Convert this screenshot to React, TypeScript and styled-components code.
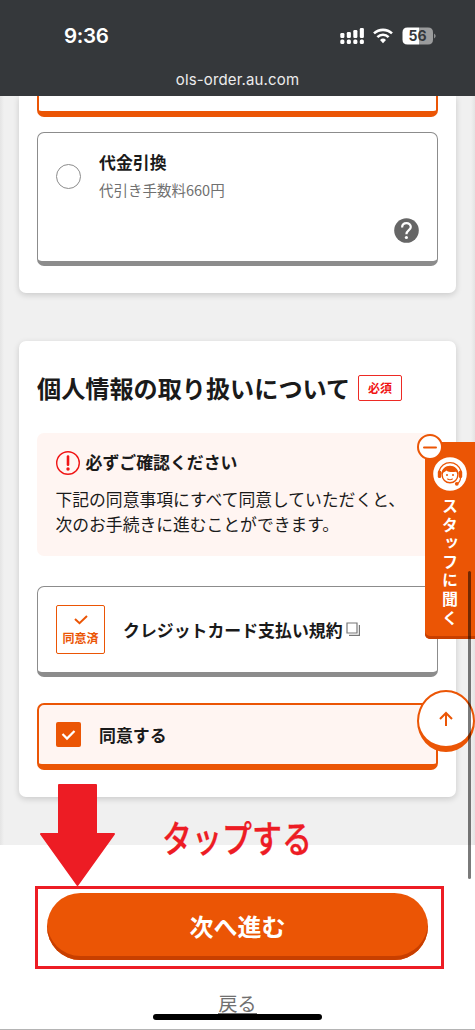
import React from 'react';
import styled, { createGlobalStyle } from 'styled-components';

const ORANGE = '#eb5505';
const RED = '#ed1c24';

const GlobalStyle = createGlobalStyle`
  *, *::before, *::after { box-sizing: border-box; }
  body {
    margin: 0;
    background: #fff;
    color: #1a1a1a;
    font-family: "Noto Sans CJK JP", "Noto Sans", sans-serif;
  }
`;

const Page = styled.div`
  position: relative;
  width: 475px;
  height: 1030px;
  overflow: hidden;
  display: flex;
  flex-direction: column;
`;

const BrowserBar = styled.header`
  flex: none;
  height: 96px;
  background: #35383b;
  color: #fff;
  font-family: Inter, "Liberation Sans", sans-serif;
  display: flex;
  flex-direction: column;
`;

const StatusRow = styled.div`
  height: 69px;
  padding: 2px 39px 0 64px;
  display: flex;
  align-items: center;
  justify-content: space-between;
`;

const Clock = styled.span`
  font-size: 20.5px;
  font-weight: 600;
  line-height: 24px;
  letter-spacing: -0.35px;
`;

const StatusIcons = styled.svg`
  display: block;
`;

const Address = styled.div`
  text-align: center;
  font-size: 15px;
  line-height: 22px;
  letter-spacing: 0.15px;
  color: #ececec;
`;

const Content = styled.main`
  flex: none;
  height: 749px;
  overflow: hidden;
  display: flex;
  flex-direction: column;
  gap: 48px;
  padding: 0 19px;
  background: linear-gradient(90deg, #e4e4e4 0, #f0f0f0 4px, #f0f0f0 471px, #e4e4e4 475px);
`;

const Card = styled.section<{ $cut?: boolean }>`
  flex: none;
  width: 437px;
  padding: ${(p) => (p.$cut ? '0 18px 27px' : '31px 18px 27px')};
  border-radius: ${(p) => (p.$cut ? '0 0 7px 7px' : '7px')};
  background: #fff;
  box-shadow: 0 2px 6px rgba(0, 0, 0, 0.16);
`;

const Panel = styled.div<{ $active?: boolean; $h: number; $mt?: number }>`
  display: flex;
  height: ${(p) => p.$h}px;
  margin-top: ${(p) => p.$mt ?? 0}px;
  border: ${(p) => (p.$active ? `2px solid ${ORANGE}` : '1px solid #8c8c8c')};
  border-bottom-width: ${(p) => (p.$active ? 6 : 5)}px;
  border-radius: 7px;
  background: ${(p) => (p.$active ? '#fff5f2' : '#fff')};
`;

const SelectedTail = styled.div`
  height: 21px;
  border: 2px solid ${ORANGE};
  border-top: 0;
  border-bottom-width: 6px;
  border-radius: 0 0 7px 7px;
`;

const PaymentOption = styled(Panel)`
  padding: 18px 18px 18px 18px;
`;

const Radio = styled.span`
  width: 25px;
  height: 25px;
  margin-top: 13px;
  border: 1px solid #8c8c8c;
  border-radius: 50%;
`;

const OptionText = styled.div`
  flex: 1;
  margin-left: 18px;
`;

const Label = styled.div`
  font-size: 16.9px;
  font-weight: 700;
  line-height: 22px;
`;

const Fee = styled.div`
  margin-top: 6px;
  font-size: 14.5px;
  line-height: 22px;
  color: #707070;
`;

const HelpIcon = styled.svg`
  align-self: flex-end;
`;

const TitleRow = styled.div`
  display: flex;
  align-items: center;
  height: 32px;
`;

const Title = styled.h2`
  margin: 0;
  font-size: 24.15px;
  font-weight: 700;
  line-height: 32px;
  white-space: nowrap;
`;

const Required = styled.span`
  width: 44px;
  height: 26px;
  margin: -1px 0 0 8px;
  border: 1px solid #ed2a24;
  border-radius: 2px;
  color: #f01414;
  font-size: 12px;
  font-weight: 700;
  line-height: 24px;
  text-align: center;
`;

const Notice = styled.div`
  height: 123px;
  margin-top: 29px;
  padding: 18px 18px 0 18.5px;
  border-radius: 7px;
  background: #fff5f2;
`;

const NoticeHead = styled.div`
  display: flex;
  align-items: center;
  gap: 6px;
  height: 24px;
  ${Label} {
    padding-bottom: 2px;
  }
`;

const NoticeBody = styled.p`
  margin: 12px -20px 0 0;
  font-size: 16.8px;
  line-height: 25.2px;
  white-space: nowrap;
`;

const TermsPanel = styled(Panel)`
  align-items: center;
  padding: 0 18px;
`;

const AgreedStamp = styled.div`
  display: flex;
  flex-direction: column;
  align-items: center;
  width: 49px;
  height: 49px;
  margin-right: 18px;
  padding-top: 9px;
  border: 1px solid ${ORANGE};
  border-radius: 2px;
  color: ${ORANGE};
  font-size: 12px;
  font-weight: 700;
  line-height: 18px;
`;

const StampCheck = styled.svg`
  flex: none;
  margin-bottom: 4px;
`;

const WindowIcon = styled.svg`
  flex: none;
  margin-left: 3px;
`;

const AgreePanel = styled(Panel)`
  align-items: center;
  padding: 0 17px;
`;

const CheckBox = styled.span`
  display: flex;
  align-items: center;
  justify-content: center;
  width: 25px;
  height: 25px;
  margin-right: 18px;
  border-radius: 2px;
  background: ${ORANGE};
`;

const Footer = styled.footer`
  flex: 1;
  display: flex;
  flex-direction: column;
  align-items: center;
  padding-top: 48px;
  background: #fff;
  border-bottom: 1px solid #b4b4b4;
`;

const NextButton = styled.button`
  width: 381px;
  height: 67px;
  padding: 0 0 1px;
  border: 0;
  border-radius: 34px;
  background: ${ORANGE};
  box-shadow: inset 0 -4px 0 #c83f00;
  color: #fff;
  font-family: inherit;
  font-size: 24px;
  font-weight: 700;
  line-height: 32px;
`;

const BackLink = styled.a`
  margin-top: 32px;
  border-bottom: 1px solid #707070;
  color: #707070;
  font-size: 19px;
  line-height: 21px;
`;

const StaffTab = styled.aside`
  position: absolute;
  left: 425px;
  top: 442px;
  width: 50px;
  height: 197px;
  padding-top: 15px;
  display: flex;
  flex-direction: column;
  align-items: center;
  border-radius: 0 0 0 5px;
  background: ${ORANGE};
  box-shadow: inset 0 -3px 0 #c83f00;
  color: #fff;
`;

const StaffIcon = styled.svg`
  flex: none;
`;

const StaffLabel = styled.span`
  height: 135px;
  margin-top: 7px;
  writing-mode: vertical-rl;
  font-size: 16px;
  font-weight: 700;
  line-height: 24px;
  letter-spacing: 2.6px;
  white-space: nowrap;
`;

const Collapse = styled.span`
  position: absolute;
  left: -8px;
  top: -8px;
  width: 26px;
  height: 26px;
  display: flex;
  align-items: center;
  justify-content: center;
  border: 2px solid ${ORANGE};
  border-radius: 50%;
  background: #fff;
`;

const ToTop = styled.div`
  position: absolute;
  left: 417px;
  top: 690px;
  width: 58px;
  height: 62px;
  display: flex;
  align-items: center;
  justify-content: center;
  border: 2px solid ${ORANGE};
  border-bottom-width: 6px;
  border-radius: 50%;
  background: #fff;
`;

const ScrollThumb = styled.div`
  position: absolute;
  left: 468px;
  top: 571px;
  width: 3px;
  height: 308px;
  border-radius: 2px;
  background: rgba(0, 0, 0, 0.52);
`;

const ArrowMark = styled.svg`
  position: absolute;
  left: 40px;
  top: 784px;
`;

const TapNote = styled.div`
  position: absolute;
  left: 162px;
  top: 813px;
  color: ${RED};
  font-size: 37px;
  font-weight: 500;
  line-height: 48px;
  white-space: nowrap;
  -webkit-text-stroke: 0.3px ${RED};
  transform: scaleX(0.81);
  transform-origin: left center;
`;

const Highlight = styled.div`
  position: absolute;
  left: 35px;
  top: 886px;
  width: 409px;
  height: 83px;
  border: 3px solid ${RED};
`;

const HomeIndicator = styled.div`
  position: absolute;
  left: 153px;
  top: 1014px;
  width: 169px;
  height: 6px;
  border-radius: 3px;
  background: #000;
`;

const Signal = () => (
  <StatusIcons width="96" height="18" viewBox="0 0 96 18">
    <g fill="#fff">
      {[5, 6, 8, 10].map((h, i) => (
        <React.Fragment key={i}>
          <rect x={0.3 + i * 6.5} y={11 - h} width="4.1" height={h} rx="1.2" />
          <rect x={0.3 + i * 6.5} y="12.4" width="4.1" height="4.6" rx="1.5" />
        </React.Fragment>
      ))}
    </g>
    <g fill="none" stroke="#fff" strokeWidth="2.6">
      <path d="M34 6.4 A13.3 13.3 0 0 1 52 6.4" />
      <path d="M37.4 10.1 A8 8 0 0 1 48.6 10.1" />
    </g>
    <path d="M40 13 A4.3 4.3 0 0 1 46 13 L43 16.2 Z" fill="#fff" />
    <path d="M67.5 0.6 H79 V17.4 H67.5 Q62.5 17.4 62.5 12.4 V5.6 Q62.5 0.6 67.5 0.6Z" fill="#fff" />
    <path d="M79 0.6 H88 Q93 0.6 93 5.6 V12.4 Q93 17.4 88 17.4 H79Z" fill="#9b9c9d" />
    <path d="M94.1 6.4 Q97.2 9 94.1 11.6Z" fill="#9b9c9d" />
    <text x="77.5" y="14" textAnchor="middle" fontFamily="Inter, sans-serif" fontSize="14" fontWeight="700" fill="#35383b">
      56
    </text>
  </StatusIcons>
);

const Staff = () => (
  <StaffIcon width="34" height="34" viewBox="0 0 34 34">
    <circle cx="17" cy="17" r="16.8" fill="#fff" />
    <g fill="none" stroke={ORANGE}>
      <path d="M6 14 A11.4 11.4 0 0 1 28 14" strokeWidth="1.3" />
      <circle cx="17" cy="17.8" r="7.9" strokeWidth="1.4" />
      <path d="M27.6 20 Q27.6 25 24.2 26.6" strokeWidth="1.2" />
      <path d="M14.3 21.8 Q17 23.8 19.7 21.8" strokeWidth="1.1" />
    </g>
    <path d="M8.4 17.5 C8.2 5.9 25.8 5.9 25.6 17.5 C25 15.9 24 15.2 22.6 14.8 C18.5 15.3 15.2 14.8 13.2 13.4 C12.4 14.8 9.6 15 8.4 17.5Z" fill={ORANGE} />
    <rect x="4.8" y="13.4" width="3.4" height="7.6" rx="1.5" fill={ORANGE} />
    <rect x="25.8" y="13.4" width="3.4" height="7.6" rx="1.5" fill={ORANGE} />
    <circle cx="14" cy="18" r="1" fill={ORANGE} />
    <circle cx="20" cy="18" r="1" fill={ORANGE} />
    <circle cx="23.8" cy="26.8" r="1.9" fill={ORANGE} />
  </StaffIcon>
);

export default function App() {
  return (
    <Page>
      <GlobalStyle />
      <BrowserBar>
        <StatusRow>
          <Clock>9:36</Clock>
          <Signal />
        </StatusRow>
        <Address>ols-order.au.com</Address>
      </BrowserBar>

      <Content>
        <Card $cut>
          <SelectedTail />
          <PaymentOption $h={134} $mt={15}>
            <Radio />
            <OptionText>
              <Label>代金引換</Label>
              <Fee>代引き手数料660円</Fee>
            </OptionText>
            <HelpIcon width="25" height="25" viewBox="0 0 25 25">
              <circle cx="12.5" cy="12.5" r="12.3" fill="#666" />
              <path d="M8.1 9.4 C8.2 3.6 16.8 3.8 16.8 9 C16.8 12 12.4 12.3 12.4 16.2" fill="none" stroke="#fff" strokeWidth="2.2" />
              <circle cx="12.4" cy="19.5" r="1.6" fill="#fff" />
            </HelpIcon>
          </PaymentOption>
        </Card>

        <Card>
          <TitleRow>
            <Title>個人情報の取り扱いについて</Title>
            <Required>必須</Required>
          </TitleRow>
          <Notice>
            <NoticeHead>
              <svg width="24" height="24" viewBox="0 0 24 24">
                <circle cx="12" cy="12" r="11.3" fill="none" stroke="#f01414" strokeWidth="1.4" />
                <path d="M12 5.6 V13.8" stroke="#f01414" strokeWidth="2.6" strokeLinecap="round" />
                <circle cx="12" cy="18" r="1.7" fill="#f01414" />
              </svg>
              <Label>必ずご確認ください</Label>
            </NoticeHead>
            <NoticeBody>
              下記の同意事項にすべて同意していただくと、
              <br />
              次のお手続きに進むことができます。
            </NoticeBody>
          </Notice>
          <TermsPanel $h={91} $mt={30}>
            <AgreedStamp>
              <StampCheck width="14" height="10" viewBox="0 0 14 10">
                <path d="M1 4 L5.5 8.2 L13 1" fill="none" stroke={ORANGE} strokeWidth="2" />
              </StampCheck>
              同意済
            </AgreedStamp>
            <Label>クレジットカード支払い規約</Label>
            <WindowIcon width="15" height="15" viewBox="0 0 15 15">
              <path d="M1 1 H11 V11 H1Z M13.4 3 V13.4 H3" fill="none" stroke="#777" strokeWidth="1.2" />
            </WindowIcon>
          </TermsPanel>
          <AgreePanel $active $h={67} $mt={26}>
            <CheckBox>
              <svg width="15" height="12" viewBox="0 0 15 12">
                <path d="M1.5 5 L6 9.6 L13.5 2" fill="none" stroke="#fff" strokeWidth="2.2" />
              </svg>
            </CheckBox>
            <Label>同意する</Label>
          </AgreePanel>
        </Card>
      </Content>

      <Footer>
        <NextButton>次へ進む</NextButton>
        <BackLink>戻る</BackLink>
      </Footer>

      <StaffTab>
        <Collapse>
          <svg width="14" height="3" viewBox="0 0 14 3">
            <path d="M1 1.5 H13" stroke={ORANGE} strokeWidth="2" strokeLinecap="round" />
          </svg>
        </Collapse>
        <Staff />
        <StaffLabel>スタッフに聞く</StaffLabel>
      </StaffTab>
      <ToTop>
        <svg width="16" height="16" viewBox="0 0 16 16">
          <path d="M8 15 V2 M2 8 L8 2 L14 8" fill="none" stroke={ORANGE} strokeWidth="2" />
        </svg>
      </ToTop>
      <ScrollThumb />
      <ArrowMark width="76" height="103" viewBox="0 0 76 103">
        <path d="M19 1 H56 V50 H74 L37.5 101 L1 50 H19Z" fill={RED} stroke={RED} strokeWidth="2" strokeLinejoin="round" />
      </ArrowMark>
      <TapNote>タップする</TapNote>
      <Highlight />
      <HomeIndicator />
    </Page>
  );
}
